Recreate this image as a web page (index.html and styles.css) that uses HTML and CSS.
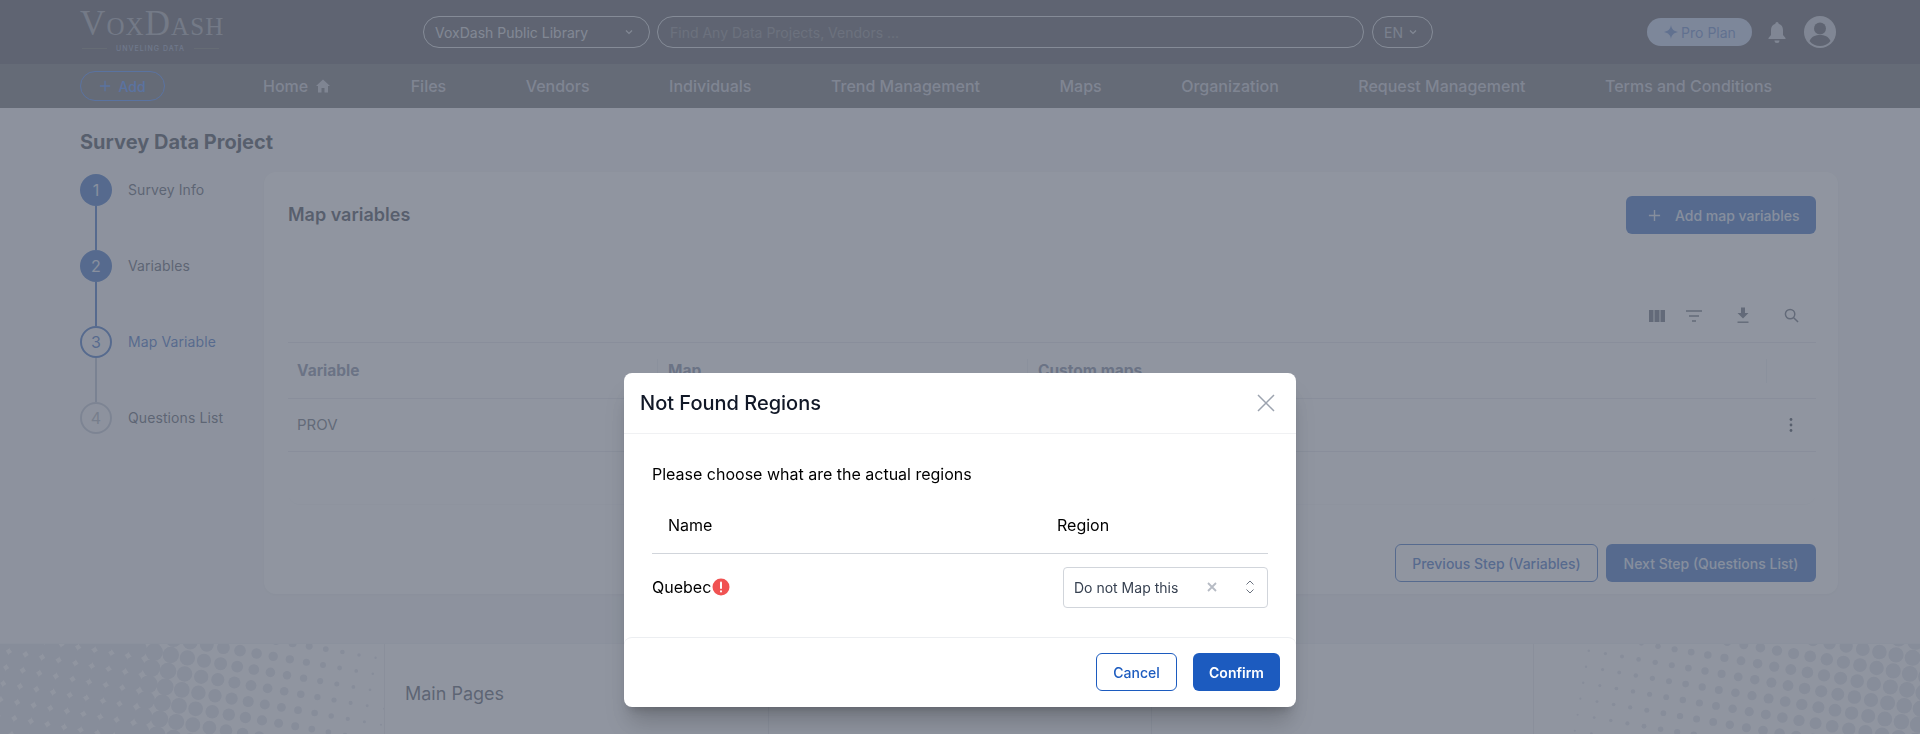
FILE: index.html
```html
<!DOCTYPE html>
<html lang="en">
<head>
<meta charset="utf-8">
<title>Survey Data Project</title>
<link rel="stylesheet" href="styles.css">
</head>
<body>
<div class="page">
  <header class="topbar">
    <div class="logo">
      <div class="logo-name">VoxDash</div>
      <div class="logo-tag"><span class="logo-rule"></span><span>UNVELING DATA</span><span class="logo-rule"></span></div>
    </div>
    <div class="pill library"><span>VoxDash Public Library</span>
      <svg class="chev" viewBox="0 0 12 12"><path d="M3 4.500 6 7.500 9 4.500"/></svg></div>
    <div class="pill search">Find Any Data Projects, Vendors ...</div>
    <div class="pill lang"><span>EN</span>
      <svg class="chev" viewBox="0 0 12 12"><path d="M3 4.500 6 7.500 9 4.500"/></svg></div>
    <div class="top-right">
      <div class="pro"><svg class="spark" viewBox="0 0 16 16"><path d="M8 1c.7 4 2.500 6 7 7-4.500 1-6.300 3-7 7-.7-4-2.500-6-7-7 4.500-1 6.300-3 7-7Z"/></svg>Pro Plan</div>
      <svg class="bell" viewBox="0 0 20 24"><path d="M10 2a1.600 1.600 0 0 1 1.600 1.700C14.600 4.500 16 7 16 10v5l2.500 3v1h-17v-1L4 15v-5c0-3 1.400-5.500 4.400-6.300A1.600 1.600 0 0 1 10 2Z"/><path d="M7.500 20.500h5a2.500 2.500 0 0 1-5 0Z"/></svg>
      <svg class="avatar" viewBox="0 0 32 32"><circle cx="16" cy="16" r="16" class="av-bg"/><circle cx="16" cy="12.500" r="6" class="av-fg"/><path class="av-fg" d="M5.500 25c2-4.500 6-6 10.500-6s8.500 1.500 10.500 6C24 28.500 20 30 16 30s-8-1.500-10.500-5Z"/></svg>
    </div>
  </header>
  <nav class="navbar">
    <div class="add-pill"><svg class="plus" viewBox="0 0 14 14"><path d="M7 1v12M1 7h12"/></svg>Add</div>
    <ul class="nav-list">
      <li class="nav-home">Home <svg class="home" viewBox="0 0 16 16"><path d="M8 1.500 15 8h-2v6.500H9.500V10h-3v4.500H3V8H1Z"/></svg></li>
      <li>Files</li>
      <li>Vendors</li>
      <li>Individuals</li>
      <li>Trend Management</li>
      <li>Maps</li>
      <li>Organization</li>
      <li>Request Management</li>
      <li>Terms and Conditions</li>
    </ul>
  </nav>
  <main class="main">
    <h1 class="title">Survey Data Project</h1>
    <div class="content">
      <ol class="steps">
        <li class="step done"><div class="marker"><span class="circle">1</span><span class="line"></span></div><span class="step-label">Survey Info</span></li>
        <li class="step done"><div class="marker"><span class="circle">2</span><span class="line"></span></div><span class="step-label">Variables</span></li>
        <li class="step current"><div class="marker"><span class="circle">3</span><span class="line"></span></div><span class="step-label">Map Variable</span></li>
        <li class="step todo"><div class="marker"><span class="circle">4</span></div><span class="step-label">Questions List</span></li>
      </ol>
      <section class="card">
        <div class="card-head">
          <h2 class="card-title">Map variables</h2>
          <button class="btn btn-primary add-map"><svg class="plus" viewBox="0 0 14 14"><path d="M7 1v12M1 7h12"/></svg>Add map variables</button>
        </div>
        <div class="toolbar">
          <svg class="tool t-col" viewBox="0 0 16 12"><path d="M0 0h4.500v12H0ZM5.500 0h5v12h-5ZM11.500 0H16v12h-4.500Z"/></svg>
          <svg class="tool t-filter" viewBox="0 0 16 12"><path d="M0 1h16M3 6h10M6 11h4" class="stroke"/></svg>
          <svg class="tool t-down" viewBox="0 0 14 16"><path d="M5 0h4v5.500h3.500L7 11 1.500 5.500H5Z"/><path d="M1.500 14h11v1.400h-11Z"/></svg>
          <svg class="tool t-search" viewBox="0 0 16 16"><circle cx="6.500" cy="6.500" r="5" class="stroke"/><path d="M10.300 10.300 15 15" class="stroke"/></svg>
        </div>
        <div class="table">
          <div class="row head">
            <div class="cell first">Variable</div>
            <div class="cell">Map</div>
            <div class="cell">Custom maps</div>
            <div class="cell"></div>
          </div>
          <div class="row body-row">
            <div class="cell first">PROV</div>
            <div class="cell"></div>
            <div class="cell"></div>
            <div class="cell kebab"><svg viewBox="0 0 4 16"><circle cx="2" cy="2.500" r="1.400"/><circle cx="2" cy="8" r="1.400"/><circle cx="2" cy="13.500" r="1.400"/></svg></div>
          </div>
        </div>
        <div class="card-actions">
          <button class="btn btn-outline prev">Previous Step (Variables)</button>
          <button class="btn btn-primary next">Next Step (Questions List)</button>
        </div>
      </section>
    </div>
  </main>
  <footer class="footer">
    <div class="foot-col dots" data-side="left"></div>
    <div class="foot-col"><h3 class="foot-title">Main Pages</h3></div>
    <div class="foot-col"></div>
    <div class="foot-col"></div>
    <div class="foot-col dots last" data-side="right"></div>
  </footer>
</div>

<div class="overlay">
  <div class="modal">
    <div class="modal-head">
      <h2 class="modal-title">Not Found Regions</h2>
      <svg class="close" viewBox="0 0 18 18"><path d="M1 1l16 16M17 1 1 17"/></svg>
    </div>
    <div class="modal-body">
      <p class="prompt">Please choose what are the actual regions</p>
      <div class="map-row map-head">
        <span class="name-head">Name</span>
        <span class="region-head">Region</span>
      </div>
      <div class="map-row map-item">
        <span class="place">Quebec<svg class="alert" viewBox="0 0 18 18"><circle cx="9" cy="9" r="8.500"/><rect x="8" y="3.500" width="2" height="7.500" rx="1"/><rect x="8" y="12.300" width="2" height="2.200" rx="1"/></svg></span>
        <div class="select"><span class="select-text">Do not Map this</span>
          <svg class="clear" viewBox="0 0 10 10"><path d="M1 1l8 8M9 1 1 9"/></svg>
          <svg class="updown" viewBox="0 0 10 16"><path d="M1.500 5.500 5 2l3.500 3.500M1.500 10.500 5 14l3.500-3.500"/></svg>
        </div>
      </div>
    </div>
    <div class="modal-foot">
      <button class="btn btn-white">Cancel</button>
      <button class="btn btn-confirm">Confirm</button>
    </div>
  </div>
</div>
<script src="script.js"></script>
</body>
</html>
```

FILE: styles.css
```css
* { box-sizing: border-box; }
html, body { margin: 0; height: 734px; overflow: hidden; }
body { font-family: Inter, "Liberation Sans", sans-serif; color: #111827; background: #f3f4f6; }
h1, h2, h3, p, ul, ol { margin: 0; padding: 0; }
ul, ol { list-style: none; }
button { font-family: inherit; cursor: pointer; }

.topbar { height: 64px; padding: 0 84px 0 80px; display: flex; align-items: center; background: #3d3f47; }
.logo { width: 343px; flex: none; color: #8e939d; }
.logo-name { font-family: "Liberation Serif", serif; font-variant: small-caps; font-size: 35px; letter-spacing: 1.100px; line-height: 30px; height: 30px; margin-top: -3px; white-space: nowrap; }
.logo-tag { display: flex; align-items: center; gap: 9px; width: 137px; margin: 5px 0 0 2px; font-size: 7px; letter-spacing: 1px; line-height: 9px; color: #7e8db0; font-weight: 500; white-space: nowrap; }
.logo-rule { flex: 1; height: 1px; background: #5a5b55; }
.pill { height: 32px; border: 1px solid #d1d5db; border-radius: 16px; display: flex; align-items: center; font-size: 14px; color: #c6c9d0; }
.library { width: 227px; padding: 0 14px 0 11px; justify-content: space-between; }
.search { width: 707px; margin-left: 7px; padding-left: 12px; color: #6f7178; }
.lang { width: 61px; height: 32px; margin-left: 8px; padding: 0 13px 0 11px; justify-content: space-between; color: #a8acb6; }
.chev { width: 12px; height: 12px; fill: none; stroke: #c6c9d0; stroke-width: 1.200; }
.top-right { margin-left: auto; display: flex; align-items: center; }
.pro { width: 105px; height: 28px; border-radius: 14px; background: #b4c6e8; color: #4470bd; font-size: 14px; display: flex; align-items: center; justify-content: center; gap: 2px; }
.spark { width: 16px; height: 16px; fill: #4470bd; }
.bell { width: 20px; height: 24px; margin-left: 15px; fill: #bfc3ce; }
.avatar { width: 32px; height: 32px; margin-left: 17px; }
.av-bg { fill: #bfc3ce; }
.av-fg { fill: #3d3f47; }

.navbar { height: 44px; padding: 0 80px; display: flex; align-items: center; background: #55575d; }
.add-pill { width: 85px; height: 30px; flex: none; border: 1px solid #2a78ff; border-radius: 15px; color: #2a78ff; font-size: 14px; font-weight: 500; display: flex; align-items: center; justify-content: center; gap: 7px; }
.plus { width: 12px; height: 12px; fill: none; stroke: currentColor; stroke-width: 1.500; }
.nav-list { display: flex; gap: 79.500px; margin-left: 98px; font-size: 16px; font-weight: 500; color: #bcbfc8; white-space: nowrap; }
.nav-home { display: flex; align-items: center; gap: 7px; }
.home { width: 16px; height: 16px; fill: #bcbfc8; }

.main { height: 535px; padding: 20px 82px 0 80px; background: #f3f4f6; }
.title { font-size: 20px; font-weight: 700; line-height: 28px; color: #1f2937; height: 28px; }
.content { display: flex; margin-top: 16px; }
.steps { width: 184px; flex: none; padding-top: 2px; }
.step { display: flex; height: 76px; }
.marker { width: 32px; display: flex; flex-direction: column; align-items: center; }
.circle { width: 32px; height: 32px; flex: none; border-radius: 50%; display: flex; align-items: center; justify-content: center; font-size: 16px; }
.line { width: 2px; height: 44px; background: #1a56b8; }
.done .circle { background: #1a56b8; color: #dfe7f5; }
.current .circle { border: 2px solid #1a56b8; color: #1a56b8; }
.current .line { background: #a8b3c8; }
.todo .circle { border: 2px solid #b5bdcc; color: #9ca3af; }
.step-label { margin-left: 16px; height: 32px; line-height: 32px; font-size: 14px; letter-spacing: .1px; color: #374151; }
.current .step-label { color: #1a56b8; }

.card { width: 1574px; height: 422px; padding: 24px 22px 12px 24px; background: #fff; border-radius: 12px; box-shadow: 0 1px 3px rgba(0,0,0,.06); }
.card-head { display: flex; justify-content: space-between; align-items: center; height: 38px; }
.card-title { font-size: 18px; font-weight: 600; color: #1f2937; margin-top: -2px; }
.btn { height: 38px; border-radius: 6px; font-size: 14px; font-weight: 500; display: inline-flex; align-items: center; justify-content: center; border: 1px solid transparent; }
.btn-primary { background: #1a56b8; color: #d8e2f3; }
.add-map { width: 190px; gap: 13.500px; padding-left: 12px; }
.add-map .plus { width: 13px; height: 13px; }
.btn-outline { background: #fff; color: #1a56b8; border-color: #1a56b8; }
.toolbar { height: 46px; margin-top: 62px; display: flex; align-items: flex-start; padding: 14px 17px 0 0; justify-content: flex-end; }
.tool { fill: #4b5563; }
.tool .stroke { fill: none; stroke: #4b5563; stroke-width: 1.600; }
.t-col { width: 16px; height: 12px; }
.t-filter { width: 16px; height: 12px; margin-left: 21px; }
.t-down { width: 14px; height: 17px; margin-left: 34px; margin-top: -3px; }
.t-search { width: 15px; height: 15px; margin-left: 34px; margin-top: -2px; }
.table { height: 163px; border-top: 1px solid #e2e4e9; border-bottom: 1px solid #f6f7f8; border-radius: 0 0 12px 12px; }
.row { display: grid; grid-template-columns: 369px 370px 739px 50px; align-items: center; border-bottom: 1px solid #e2e4e9; }
.head { height: 56px; font-size: 15.500px; font-weight: 700; color: #6b7793; }
.body-row { height: 53px; font-size: 15px; color: #4b5563; }
.cell { padding-left: 10px; line-height: 24px; height: 24px; }
.head .cell { border-left: 1px solid #eceef1; }
.head .cell.first { border-left: 0; }
.cell.first { padding-left: 9px; }
.kebab { padding-left: 23px; display: flex; align-items: center; }
.kebab svg { width: 4px; height: 16px; fill: #1f2937; }
.card-actions { display: flex; justify-content: flex-end; gap: 8px; margin-top: 39px; }
.prev { width: 203px; }
.next { width: 210px; }

.footer { height: 91px; display: grid; grid-template-columns: 385px 384px 383px 382px 386px; background: #fff; border-top: 1px solid #eceef1; }
.foot-col { border-right: 1px solid #e5e7eb; padding: 36px 20px 0; overflow: hidden; }
.foot-col.last { border-right: 0; }
.foot-title { font-size: 18px; font-weight: 400; line-height: 28px; color: #374151; }
.dots { padding: 0; }
.dot-svg { display: block; width: 100%; height: 100%; fill: #dadde6; }

.overlay { position: fixed; inset: 0; background: rgba(107,114,128,.75); display: flex; justify-content: center; align-items: flex-end; padding-bottom: 27px; }
.modal { width: 672px; height: 334px; background: #fff; border-radius: 8px; box-shadow: 0 20px 25px -5px rgba(0,0,0,.2), 0 8px 10px -6px rgba(0,0,0,.2); display: flex; flex-direction: column; }
.modal-head { height: 61px; padding: 0 20px 0 16px; display: flex; align-items: center; justify-content: space-between; border-bottom: 1px solid #f0f1f3; }
.modal-title { font-size: 20px; font-weight: 500; color: #111827; }
.close { width: 18px; height: 18px; fill: none; stroke: #9ca3af; stroke-width: 1.500; margin-right: 1px; }
.modal-body { flex: 1; padding: 28px 28px 0; }
.prompt { font-size: 16px; line-height: 24px; color: #000; }
.map-row { display: flex; justify-content: space-between; align-items: center; }
.map-head { height: 59px; margin-top: 9px; border-bottom: 1px solid #d1d5db; font-size: 16px; justify-content: flex-start; padding-top: 2px; color: #000; }
.name-head { margin-left: 16px; width: 389px; }
.map-item { height: 66px; font-size: 16px; color: #000; }
.place { display: flex; align-items: center; gap: 1px; }
.alert { width: 18px; height: 18px; fill: #f05252; }
.alert rect { fill: #fff; }
.select { width: 205px; height: 41px; border: 1px solid #d1d5db; border-radius: 4px; display: flex; align-items: center; padding: 0 10px; font-size: 14px; color: #374151; }
.select-text { width: 133px; }
.clear { width: 10px; height: 10px; fill: none; stroke: #b6bbc4; stroke-width: 1.800; }
.updown { width: 10px; height: 16px; margin-left: 28px; fill: none; stroke: #6b7280; stroke-width: 1; }
.modal-foot { height: 70px; border-top: 1px solid #eceef1; border-radius: 8px 8px 0 0; display: flex; justify-content: flex-end; align-items: flex-start; gap: 16px; padding: 15px 16px 0 0; }
.btn-white { width: 81px; background: #fff; color: #1c5bbf; border-color: #1c5bbf; }
.btn-confirm { width: 87px; background: #1c5bbf; color: #fff; font-weight: 600; }
```

FILE: script.js
```js
// Draws the halftone dot texture in the two outer footer columns.
var NS = 'http://www.w3.org/2000/svg';
document.querySelectorAll('.dots').forEach(function (col) {
  var side = col.getAttribute('data-side');
  var w = col.clientWidth, h = col.clientHeight;
  var svg = document.createElementNS(NS, 'svg');
  svg.setAttribute('class', 'dot-svg');
  svg.setAttribute('viewBox', '0 0 ' + w + ' ' + h);
  for (var i = -10; i < 40; i++) {
    for (var j = -10; j < 20; j++) {
      var x = i * 16.6 - j * 2.8 + (side === 'left' ? 2 : 5);
      var y = i * 2.9 + j * 16 - 2;
      if (x < -10 || x > w + 10 || y < -10 || y > h + 10) continue;
      var r;
      if (side === 'left') {
        r = x < 130 ? 9.6 : 9.6 * (1 - (x - 130) / 280);
      } else {
        r = x < 40 ? 0 : 1 + 7 * (x - 40) / 340;
      }
      if (r <= 0.3) continue;
      var c = document.createElementNS(NS, 'circle');
      c.setAttribute('cx', x.toFixed(1));
      c.setAttribute('cy', y.toFixed(1));
      c.setAttribute('r', r.toFixed(2));
      svg.appendChild(c);
    }
  }
  col.appendChild(svg);
});
```
